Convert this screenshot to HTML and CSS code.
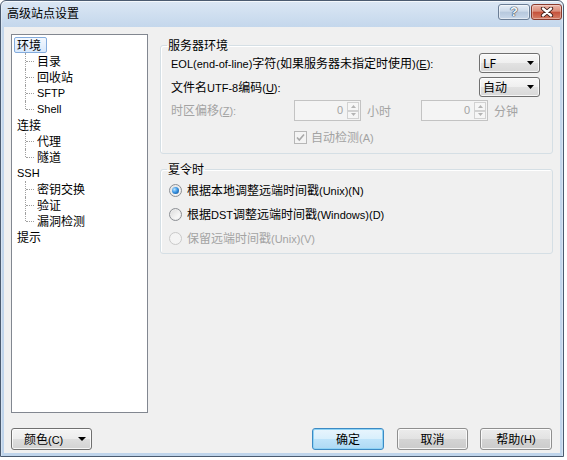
FILE: index.html
```html
<!DOCTYPE html>
<html lang="zh-CN">
<head>
<meta charset="utf-8">
<title>高级站点设置</title>
<link rel="stylesheet" href="styles.css">
</head>
<body>
<div class="window">
  <div class="titlebar">
    <span class="title">高级站点设置</span>
    <div class="caption">
      <span class="cbtn help">?</span>
      <span class="cbtn close">
        <svg width="14" height="10" viewBox="0 0 14 10">
          <path d="M3 1.5 L11 8.5 M11 1.5 L3 8.5" stroke="#3b1a14" stroke-width="4.2" stroke-linecap="round"/>
          <path d="M3 1.5 L11 8.5 M11 1.5 L3 8.5" stroke="#ffffff" stroke-width="2.4" stroke-linecap="round"/>
        </svg>
      </span>
    </div>
  </div>
  <div class="client">
    <div class="main">
      <div class="tree">
        <div class="node"><span class="t sel">环境</span></div>
        <ul class="children">
          <li><span class="t">目录</span></li>
          <li><span class="t">回收站</span></li>
          <li><span class="t l">SFTP</span></li>
          <li><span class="t l">Shell</span></li>
        </ul>
        <div class="node"><span class="t">连接</span></div>
        <ul class="children">
          <li><span class="t">代理</span></li>
          <li><span class="t">隧道</span></li>
        </ul>
        <div class="node"><span class="t l">SSH</span></div>
        <ul class="children">
          <li><span class="t">密钥交换</span></li>
          <li><span class="t">验证</span></li>
          <li><span class="t">漏洞检测</span></li>
        </ul>
        <div class="node"><span class="t">提示</span></div>
      </div>
      <div class="pane">
        <fieldset class="group g1">
          <legend>服务器环境</legend>
          <div class="row r1">
            <span><span class="l">EOL(end-of-line)</span>字符<span class="l">(</span>如果服务器未指定时使用<span class="l">)(<u>E</u>):</span></span>
            <div class="combo"><span>LF</span><svg class="arr" width="7" height="4" viewBox="0 0 7 4"><path d="M0 0H7L3.5 4Z" fill="#000"/></svg></div>
          </div>
          <div class="row r2">
            <span>文件名<span class="l">UTF-8</span>编码<span class="l">(<u>U</u>):</span></span>
            <div class="combo"><span>自动</span><svg class="arr" width="7" height="4" viewBox="0 0 7 4"><path d="M0 0H7L3.5 4Z" fill="#000"/></svg></div>
          </div>
          <div class="row r3 dis">
            <span class="lab3">时区偏移<span class="l">(<u>Z</u>):</span></span>
            <div class="spin">
              <span class="val l">0</span>
              <span class="arrows">
                <span class="a"><svg width="5" height="3" viewBox="0 0 5 3"><path d="M0 3H5L2.5 0Z" fill="#b4b4b4"/></svg></span>
                <span class="a"><svg width="5" height="3" viewBox="0 0 5 3"><path d="M0 0H5L2.5 3Z" fill="#b4b4b4"/></svg></span>
              </span>
            </div>
            <span class="unit">小时</span>
            <div class="spin spin2">
              <span class="val l">0</span>
              <span class="arrows">
                <span class="a"><svg width="5" height="3" viewBox="0 0 5 3"><path d="M0 3H5L2.5 0Z" fill="#b4b4b4"/></svg></span>
                <span class="a"><svg width="5" height="3" viewBox="0 0 5 3"><path d="M0 0H5L2.5 3Z" fill="#b4b4b4"/></svg></span>
              </span>
            </div>
            <span class="unit">分钟</span>
          </div>
          <div class="row r4 dis">
            <span class="chk"><svg width="11" height="11" viewBox="0 0 11 11"><path d="M2 5.5 L4.3 8 L9 2.5" fill="none" stroke="#a8a8a8" stroke-width="1.6"/></svg></span>
            <span class="chklab">自动检测<span class="l">(A)</span></span>
          </div>
        </fieldset>
        <fieldset class="group g2">
          <legend>夏令时</legend>
          <div class="rrow"><span class="radio on"></span><span>根据本地调整远端时间戳<span class="l">(Unix)(N)</span></span></div>
          <div class="rrow"><span class="radio"></span><span>根据<span class="l">DST</span>调整远端时间戳<span class="l">(Windows)(D)</span></span></div>
          <div class="rrow dis"><span class="radio off"></span><span>保留远端时间戳<span class="l">(Unix)(V)</span></span></div>
        </fieldset>
      </div>
    </div>
    <div class="bottom">
      <div class="btn color"><span>颜色<span class="l">(C)</span></span><svg class="arr" width="8" height="4" viewBox="0 0 8 4"><path d="M0 0H8L4 4Z" fill="#000"/></svg></div>
      <div class="btn ok">确定</div>
      <div class="btn gray cancel">取消</div>
      <div class="btn gray helpb">帮助<span class="l">(H)</span></div>
    </div>
  </div>
</div>
</body>
</html>
```

FILE: styles.css
```css
* { box-sizing: border-box; }
html, body { margin: 0; padding: 0; }
body {
  background: #ffffff;
  font-family: "Noto Sans CJK SC", sans-serif;
  font-size: 12px;
  line-height: 16px;
  color: #000;
}
.l { font-family: "Liberation Sans", sans-serif; font-size: 11px; }
u { text-decoration: underline; text-underline-offset: 1px; }

.window {
  width: 564px;
  border: 1px solid #4b5b70;
  border-radius: 6px 6px 0 0;
  background: linear-gradient(180deg, #dbe7f4 0px, #c4d7ec 26px, #bfd4eb 100%);
  box-shadow: inset 0 1px 0 rgba(255,255,255,0.7), inset 1px 0 0 rgba(255,255,255,0.35), inset -1px 0 0 rgba(255,255,255,0.35);
}
.titlebar {
  height: 26px;
  display: flex;
  align-items: flex-start;
  padding-left: 6px;
}
.title { margin-top: 4px; }
.caption {
  margin-left: auto;
  margin-top: 3px;
  margin-right: 1px;
  display: flex;
  gap: 1px;
}
.cbtn {
  height: 16px;
  border-radius: 3px;
  display: flex;
  align-items: center;
  justify-content: center;
}
.help {
  width: 32px;
  border: 1px solid #6b7e96;
  background: linear-gradient(180deg, #e6eef7 0%, #ccdaea 45%, #b6c8dd 50%, #c9d8ea 100%);
  box-shadow: inset 0 0 0 1px rgba(255,255,255,0.5);
  font: bold 13px/14px "Liberation Sans", sans-serif;
  color: #f4f8fc;
  text-shadow: 0 0 1px #2d3e55, 0 0 1px #2d3e55, 0 0 1px #2d3e55;
}
.close {
  width: 31px;
  border: 1px solid #8a3a2c;
  background: linear-gradient(180deg, #ecb5a8 0%, #da8d7a 45%, #c5503a 50%, #d67e66 100%);
  box-shadow: inset 0 0 0 1px rgba(255,255,255,0.35);
}

.client {
  margin: 0 3px 3px;
  background: #f0f0f0;
  padding: 7px 7px 3px;
}
.main { display: flex; gap: 12px; }

.tree {
  width: 137px;
  height: 379px;
  border: 1px solid #828790;
  background: #fff;
  padding-top: 2px;
}
.node { height: 16px; display: flex; }
.t {
  display: inline-block;
  height: 16px;
  line-height: 14px;
  margin-left: 2px;
  padding: 0 5px 0 2px;
  border: 1px solid transparent;
  border-radius: 2px;
  white-space: nowrap;
}
.t.l { line-height: 14px; }
.t.sel {
  border-color: #84acdd;
  background: linear-gradient(180deg, #f3f8fe, #d9e9fc);
}
.children { list-style: none; margin: 0 0 0 13px; padding: 0; }
.children li {
  position: relative;
  height: 16px;
  padding-left: 7px;
  display: flex;
}
.children li::before {
  content: "";
  position: absolute;
  left: 0; top: 0; bottom: 0;
  border-left: 1px dotted #a0a0a0;
}
.children li:last-child::before { bottom: 8px; }
.children li::after {
  content: "";
  position: absolute;
  left: 1px; top: 8px;
  width: 8px;
  border-top: 1px dotted #a0a0a0;
}

.pane { width: 393px; padding-top: 3px; }
.group {
  margin: 0;
  min-width: 0;
  border: 1px solid #d5dfe5;
  border-radius: 3px;
  box-shadow: inset 1px 1px 0 #fff;
}
.group legend { padding: 0 1px; line-height: 16px; }
.g1 { padding: 0 12px 8px 10px; }
.g1 legend { margin-left: -4px; }
.g2 { margin-top: 7px; padding: 1px 12px 3px 8px; }
.g2 legend { margin-left: -2px; }

.row { display: flex; align-items: center; white-space: nowrap; }
.r1 { height: 20px; }
.r2 { height: 20px; margin-top: 4px; }
.r3 { height: 21px; margin-top: 3px; }
.r4 { height: 16px; margin-top: 8px; }
.dis { color: #a3a3a3; }

.combo {
  margin-left: auto;
  width: 61px;
  height: 20px;
  border: 1px solid #707070;
  border-radius: 3px;
  background: linear-gradient(180deg, #f8f8f8 0%, #efefef 50%, #e2e2e2 50%, #d8d8d8 100%);
  box-shadow: inset 0 0 0 1px rgba(255,255,255,0.75);
  display: flex;
  align-items: center;
  padding: 0 5px 0 3px;
}
.combo .arr { margin-left: auto; }

.lab3 { width: 123px; }
.spin {
  width: 67px;
  height: 21px;
  border: 1px solid #c3c3c3;
  background: #f4f4f4;
  display: flex;
}
.spin .val { flex: 1; text-align: right; padding-right: 4px; line-height: 19px; }
.spin .arrows {
  width: 13px;
  display: flex;
  flex-direction: column;
  padding: 1px 1px 1px 0;
}
.spin .a {
  flex: 1;
  border: 1px solid #d2d2d2;
  background: #f6f6f6;
  display: flex;
  align-items: center;
  justify-content: center;
}
.unit { margin-left: 6px; }
.spin2 { margin-left: 30px; }

.chk {
  margin-left: 123px;
  width: 13px;
  height: 13px;
  border: 1px solid #b7b7b7;
  background: #f4f4f4;
  display: flex;
  align-items: center;
  justify-content: center;
}
.chklab { margin-left: 4px; }

.rrow { height: 24px; display: flex; align-items: center; white-space: nowrap; }
.radio {
  width: 13px;
  height: 13px;
  margin-left: 0;
  margin-right: 5px;
  border-radius: 50%;
  border: 1px solid #8c8f94;
  background: linear-gradient(135deg, #d9d9d9 0%, #f3f3f3 60%, #ffffff 100%);
  box-shadow: inset 0 0 0 1px #ececec;
  display: flex;
  align-items: center;
  justify-content: center;
}
.radio.on::after {
  content: "";
  width: 7px;
  height: 7px;
  border-radius: 50%;
  background: radial-gradient(circle at 35% 35%, #b9e3ff 0%, #3a95e4 45%, #0d4583 100%);
}
.radio.off {
  border-color: #c9c9c9;
  background: #f4f4f4;
  box-shadow: none;
}

.bottom { display: flex; margin-top: 15px; padding-right: 1px; }
.btn {
  height: 22px;
  border: 1px solid #707070;
  border-radius: 3px;
  background: linear-gradient(180deg, #f4f4f4 0%, #ececec 50%, #dedede 50%, #d2d2d2 100%);
  box-shadow: inset 0 0 0 1px rgba(255,255,255,0.8);
  display: flex;
  align-items: center;
  justify-content: center;
  white-space: nowrap;
}
.color { width: 81px; justify-content: flex-start; padding: 0 5px 0 12px; }
.color .arr { margin-left: auto; }
.ok {
  width: 72px;
  margin-left: auto;
  border-color: #3c8ac4;
  background: linear-gradient(180deg, #e8f5fd 0%, #d8effc 50%, #bfe4fa 50%, #aed9f4 100%);
  box-shadow: inset 0 0 0 1px #8fd3f5;
}
.gray {
  border-color: #8f8f8f;
  background: linear-gradient(180deg, #ececec 0%, #e2e2e2 50%, #d4d4d4 50%, #cbcbcb 100%);
}
.cancel { width: 71px; margin-left: 13px; }
.helpb { width: 72px; margin-left: 12px; }
```
